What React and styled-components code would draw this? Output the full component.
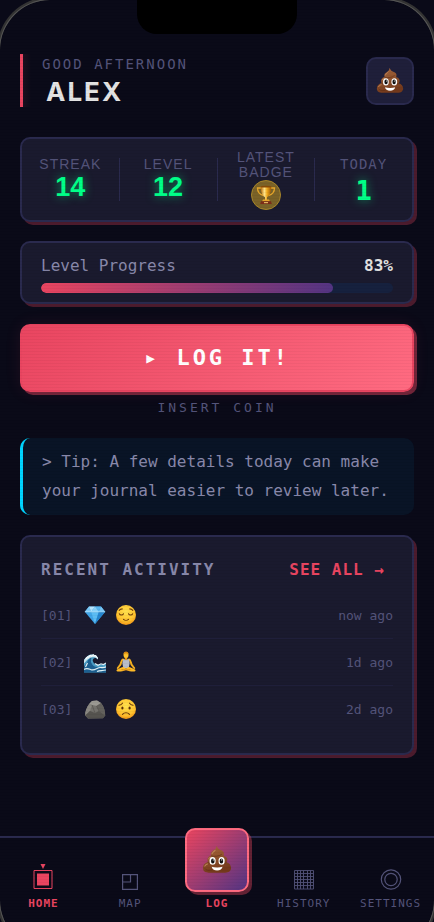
import React from "react";
import styled, { createGlobalStyle, css } from "styled-components";

const activity = [
  { id: "01", kind: "gem", mood: "relieved", when: "now ago" },
  { id: "02", kind: "wave", mood: "calm", when: "1d ago" },
  { id: "03", kind: "rock", mood: "worried", when: "2d ago" },
];

const progress = 83;

const Poop = ({ size }) => (
  <svg width={size} height={size} viewBox="0 0 32 32" aria-hidden="true">
    <defs>
      <linearGradient id="poop" x1="0" y1="0" x2="0.3" y2="1">
        <stop offset="0" stopColor="#a5673f" />
        <stop offset="0.55" stopColor="#8f522c" />
        <stop offset="1" stopColor="#74391b" />
      </linearGradient>
    </defs>
    <path
      d="M15 1c.5 1.800-.2 3.200-2.200 4.400-2.200 1.300-3.600 2.700-3.300 4.900.1.600.3 1 .3 1-2.500.5-4.200 2.500-4 4.900.1 1.200.5 2 .5 2C3.400 18.900 1 21.300 1 24.500c0 3.400 2.500 5 6.200 5h17.600c3.600 0 6.200-1.700 6.200-4.900 0-3.100-2-5.300-4.900-6.100.8-1 1.100-2.200.8-3.500-.5-2-1.900-3-4-3.200.8-1.600.8-3.600-.5-4.900-1-1-2.500-1.200-3.800-2C17 4.100 16.500 1.700 15 1z"
      fill="url(#poop)"
    />
    <path d="M9.700 11.700c3.500 1 8.700.4 11.500-1.900M6 18.700c3 .9 5 .7 7 .2M26.300 18.800c-3 1.200-6 1-8.500.2M3 25c2 2.700 6 2 8 1.500" stroke="#5d2c14" strokeWidth="0.900" fill="none" opacity="0.700" />
    <path d="M14 5.600c-1.200 1.500-2.800 2-3.300 3.700M7.200 14.600c.5-1 1.500-1.400 2.600-1.500M3 22.500c.6-1.300 1.700-2 3-2.300" stroke="#c98e63" strokeWidth="1.100" fill="none" strokeLinecap="round" opacity="0.800" />
    <ellipse cx="11.300" cy="17" rx="3.300" ry="4.100" fill="#fff" />
    <ellipse cx="20.900" cy="17" rx="3.300" ry="4.100" fill="#fff" />
    <ellipse cx="11.500" cy="17" rx="1.900" ry="2.700" fill="#111" />
    <ellipse cx="20.700" cy="17" rx="1.900" ry="2.700" fill="#111" />
    <circle cx="12" cy="15.900" r="0.600" fill="#fff" />
    <circle cx="21" cy="15.900" r="0.600" fill="#fff" />
    <path d="M10.300 23.200c3.400 1 8.200 1 11.600 0-.4 2.500-2.600 3.900-5.800 3.900s-5.400-1.400-5.800-3.900z" fill="#fff" />
  </svg>
);

const Trophy = () => (
  <svg width="20" height="20" viewBox="0 0 20 20" aria-hidden="true">
    <defs>
      <linearGradient id="cup" x1="0" x2="1">
        <stop offset="0" stopColor="#b4690a" />
        <stop offset="0.350" stopColor="#ffe48a" />
        <stop offset="0.600" stopColor="#f0a91c" />
        <stop offset="1" stopColor="#9a5606" />
      </linearGradient>
    </defs>
    <path d="M5.500 3H1.500c0 4 2 6.500 6 7.500M14.500 3h4c0 4-2 6.500-6 7.500" fill="none" stroke="#e5a52a" strokeWidth="1.300" />
    <path d="M4.700 1.500h10.600c0 5-1.300 9.500-4.300 10.500v3H9v-3C6 11 4.700 6.500 4.700 1.500z" fill="url(#cup)" />
    <ellipse cx="10" cy="1.700" rx="5.300" ry="0.900" fill="#8a4c08" />
    <path d="M7 14.500h6l1 2H6z" fill="#e5a52a" />
    <path d="M5 16.300h10l.8 2.700H4.200z" fill="#7c2c17" />
    <path d="M8 17h4v1.200H8z" fill="#e0b060" />
  </svg>
);

const Gem = () => (
  <svg width="22" height="22" viewBox="0 0 22 22" aria-hidden="true">
    <path d="M5 2.500h12l4.200 5.300L11 20 .8 7.800z" fill="#3fa4e8" />
    <path d="M5 2.500L.8 7.800h6.400zM17 2.500l4.200 5.300h-6.400z" fill="#7cc9f6" />
    <path d="M5 2.500h6L7.200 7.800z" fill="#b7e5fd" />
    <path d="M17 2.500h-6l3.800 5.300z" fill="#58b5ef" />
    <path d="M11 2.500l3.800 5.300H7.200z" fill="#8ad3fa" />
    <path d="M7.200 7.800h7.600L11 20z" fill="#5bbcf3" />
    <path d="M14.800 7.800h6.400L11 20z" fill="#2585ce" />
    <path d="M.8 7.800h20.400" stroke="#d5f1ff" strokeWidth="0.600" />
  </svg>
);

const Wave = () => (
  <svg width="22" height="22" viewBox="0 0 22 22" aria-hidden="true">
    <path d="M0 9C2 5.500 5 3.500 8.500 3.500c3.500.2 5.700 2.200 5.500 5-1.500-1.800-3.500-2-4.600-.7-1.400 1.700-.3 4.700 3.400 5.700 3 .8 5.200-1 9.200-.3V21.500H0z" fill="#4a9cc4" />
    <path d="M3 12c.8-3 2.500-5 4.700-5.500C6 9.300 7 13 10 15.300c3.500 2 7 .5 12 1v5.200H0V15z" fill="#1c5f90" />
    <path d="M0 9C2 5.500 5 3.500 8.500 3.500c3.500.2 5.700 2.200 5.500 5C12.500 6.500 10.500 6 8.500 6.200 5.300 6.500 2.500 9 0 12.500z" fill="#cfe9f1" />
    <path d="M2 8l1-2 1.500.7L6 4.300l1.500 1L9 3.500l1.700 1.300 1.300-.2.6 1.800 1.400.8" stroke="#fff" strokeWidth="1" fill="none" />
    <path d="M0 18.500c3-2 5-.5 7 .2 4 1.300 6-2.200 9.500-2.200 2 0 3.500.5 5.500-.7M11 12.500l3 1.800 3-1.500 2.500.8L22 12M1.500 16l2-4M13 20.500c3-1.500 5-.5 9-1.500" stroke="#e1f2f6" strokeWidth="1.200" fill="none" />
  </svg>
);

const Rock = () => (
  <svg width="22" height="22" viewBox="0 0 22 22" aria-hidden="true">
    <path d="M1.200 17.500C.8 13 3 9 5.500 5.500L8 3l5-.5 4 2.500c3 3.500 4 7.500 4.200 12.500L19 20.200l-15 .2z" fill="#74726d" />
    <path d="M5.500 5.500L8 3l5-.5L17 5l-4.500 3L8 7z" fill="#9b9993" />
    <path d="M5.500 5.500L8 7l-2 6-4.800 4.500C.8 13 3 9 5.500 5.500z" fill="#8a8882" />
    <path d="M12.500 8L17 5c3 3.500 4 7.500 4.200 12.500L15 13z" fill="#64625d" />
    <path d="M1.200 17.500L6 13l5 2 4-2 6.200 4.500L19 20.200l-15 .2z" fill="#55534f" />
    <path d="M8 7l3 8M12.500 8L15 13" stroke="#504e4a" strokeWidth="0.600" />
  </svg>
);

const FaceBase = () => (
  <>
    <defs>
      <radialGradient id="face" cx="0.500" cy="0.350" r="0.700">
        <stop offset="0" stopColor="#ffe24f" />
        <stop offset="0.650" stopColor="#ffc22e" />
        <stop offset="1" stopColor="#f08c12" />
      </radialGradient>
    </defs>
    <circle cx="11" cy="11" r="10" fill="url(#face)" />
  </>
);

const Relieved = () => (
  <svg width="22" height="22" viewBox="0 0 22 22" aria-hidden="true">
    <FaceBase />
    <g stroke="#6b3a0a" strokeWidth="1.100" fill="none" strokeLinecap="round">
      <path d="M4.300 9.800c.8 1.600 3.400 1.600 4.200 0M13.500 9.800c.8 1.600 3.400 1.600 4.200 0" />
      <path d="M4.200 6.400c.8-1 1.900-1.500 3-1.500M17.800 6.400c-.8-1-1.900-1.500-3-1.500" />
      <path d="M8.500 15.300c1.300 1.300 3.700 1.300 5 0" />
    </g>
  </svg>
);

const Worried = () => (
  <svg width="22" height="22" viewBox="0 0 22 22" aria-hidden="true">
    <FaceBase />
    <g stroke="#6b3a0a" strokeWidth="1.100" fill="none" strokeLinecap="round">
      <path d="M4 7.300c1.500-.3 2.700-1 3.500-2.100M18 7.300c-1.500-.3-2.700-1-3.500-2.100" />
      <path d="M7.500 16.300c1.700-2 5.300-2 7 0" />
    </g>
    <ellipse cx="7.400" cy="9.900" rx="1.100" ry="1.500" fill="#5a2e08" />
    <ellipse cx="14.600" cy="9.900" rx="1.100" ry="1.500" fill="#5a2e08" />
  </svg>
);

const Calm = () => (
  <svg width="22" height="22" viewBox="0 0 22 22" aria-hidden="true">
    <path d="M8 8.500C6.500 9 6.300 11 5.500 13.500L2.800 17M14 8.500c1.500.5 1.700 2.500 2.500 5l2.700 3.500" stroke="#f5b01f" strokeWidth="2" fill="none" strokeLinecap="round" />
    <path d="M8 8.200h6l.6 4-.8 5H8.200l-.8-5z" fill="#b9bdc9" />
    <path d="M9.800 6h2.400v2.400c-.6.900-1.800.9-2.400 0z" fill="#e89a14" />
    <ellipse cx="11" cy="4" rx="2.500" ry="3.100" fill="#ffc22e" />
    <path d="M8.500 3.500C8.500 1.500 9.500.6 11 .6s2.500.9 2.500 2.900C12.500 2 9.500 2 8.500 3.500z" fill="#d88a10" />
    <path d="M2 18.500c2-1 4.500-2.500 6.500-2.500l2.500 1.500L13.500 16c2 0 4.500 1.500 6.500 2.500 1 .8.500 2-.7 2-3 .2-5-.2-8.300-1.500-3.300 1.300-5.300 1.700-8.300 1.500-1.200 0-1.700-1.200-.7-2z" fill="#ffba26" />
    <path d="M6.500 18.600c2 .6 7 .6 9 0" stroke="#c97a0c" strokeWidth="0.700" fill="none" />
  </svg>
);

const icons = {
  gem: Gem,
  wave: Wave,
  rock: Rock,
  relieved: Relieved,
  calm: Calm,
  worried: Worried,
};

const HomeIcon = () => (
  <svg width="20" height="26" viewBox="0 0 20 26" fill="none" aria-hidden="true">
    <path d="M7.500 0h5L10 5z" fill="currentColor" />
    <path d="M1 6.500h18v18H1z" stroke="currentColor" />
    <path d="M4 9.500h12v12H4z" fill="currentColor" />
  </svg>
);

const MapIcon = () => (
  <svg width="16" height="16" viewBox="0 0 16 16" fill="none" stroke="currentColor" strokeWidth="1.200" aria-hidden="true">
    <path d="M.6.600h14.800v14.800H.6zM8.500.600v7.400H.6" />
  </svg>
);

const HistoryIcon = () => (
  <svg width="20" height="26" viewBox="0 0 20 26" fill="none" stroke="currentColor" aria-hidden="true">
    <path d="M.5 6.500h19v18.500H.5zM3.500 6.500v18.500M6.500 6.500v18.500M9.500 6.500v18.500M13.500 6.500v18.500M16.500 6.500v18.500M.5 9.500h19M.5 12.500h19M.5 15.500h19M.5 18.500h19M.5 21.500h19" strokeWidth="0.900" />
  </svg>
);

const SettingsIcon = () => (
  <svg width="22" height="26" viewBox="0 0 22 26" fill="none" stroke="currentColor" strokeWidth="1.200" aria-hidden="true">
    <circle cx="11" cy="15.500" r="9.700" />
    <circle cx="11" cy="15.500" r="6.200" />
  </svg>
);

const App = () => {
  return (
    <Screen>
      <GlobalStyle />
      <Notch />
      <Main>
        <Header>
          <Greeting>
            <Hello>GOOD AFTERNOON</Hello>
            <UserName>ALEX</UserName>
          </Greeting>
          <AvatarButton aria-label="Profile">
            <Poop size={28} />
          </AvatarButton>
        </Header>

        <StatsCard>
          <Stat>
            <StatLabel>STREAK</StatLabel>
            <StatValue>14</StatValue>
          </Stat>
          <Divider />
          <Stat>
            <StatLabel>LEVEL</StatLabel>
            <StatValue>12</StatValue>
          </Stat>
          <Divider />
          <Stat>
            <StatLabel>LATEST BADGE</StatLabel>
            <Badge>
              <Trophy />
            </Badge>
          </Stat>
          <Divider />
          <Stat $mono>
            <StatLabel>TODAY</StatLabel>
            <StatValue>1</StatValue>
          </Stat>
        </StatsCard>

        <ProgressCard>
          <ProgressRow>
            <span>Level Progress</span>
            <strong>{progress}%</strong>
          </ProgressRow>
          <Track>
            <Fill style={{ width: `${progress}%` }} />
          </Track>
        </ProgressCard>

        <LogButton>▸ LOG IT!</LogButton>
        <Coin>INSERT COIN</Coin>

        <Tip>&gt; Tip: A few details today can make your journal easier to review later.</Tip>

        <ActivityCard>
          <ActivityHead>
            <ActivityTitle>RECENT ACTIVITY</ActivityTitle>
            <SeeAll>SEE ALL →</SeeAll>
          </ActivityHead>
          <List>
            {activity.map((item) => {
              const Kind = icons[item.kind];
              const Mood = icons[item.mood];
              return (
                <Row key={item.id}>
                  <span>[{item.id}]</span>
                  <Icons>
                    <Kind />
                    <Mood />
                  </Icons>
                  <span>{item.when}</span>
                </Row>
              );
            })}
          </List>
        </ActivityCard>
      </Main>

      <Nav>
        <NavLink href="#home" $active>
          <HomeIcon />
          HOME
        </NavLink>
        <NavLink href="#map">
          <MapIcon />
          MAP
        </NavLink>
        <NavLink href="#log" $active>
          <LogTile>
            <Poop size={30} />
          </LogTile>
          LOG
        </NavLink>
        <NavLink href="#history">
          <HistoryIcon />
          HISTORY
        </NavLink>
        <NavLink href="#settings">
          <SettingsIcon />
          SETTINGS
        </NavLink>
      </Nav>
      <Scanlines />
      <Bezel />
    </Screen>
  );
};

export default App;

const mono = `"DejaVu Sans Mono", monospace`;
const muted = "#54547a";

const GlobalStyle = createGlobalStyle`
  * {
    box-sizing: border-box;
  }
  body {
    margin: 0;
    background: #0a0a18;
    font-family: ${mono};
    color: #8888aa;
  }
  button {
    font-family: inherit;
    cursor: pointer;
  }
`;

const Screen = styled.div`
  min-height: 100vh;
  display: flex;
  flex-direction: column;
  overflow: hidden;
`;

const Notch = styled.div`
  width: 160px;
  height: 34px;
  margin: 0 auto;
  border-radius: 0 0 20px 20px;
  background: #000;
`;

const Main = styled.main`
  flex: 1;
  display: flex;
  flex-direction: column;
  padding: 20px;
`;

const Header = styled.header`
  display: flex;
  align-items: center;
  justify-content: space-between;
  margin-bottom: 30px;
`;

const Greeting = styled.div`
  height: 53px;
  padding-left: 19px;
  border-left: 3px solid #e94560;
  background: linear-gradient(90deg, rgba(233, 69, 96, 0.08), transparent 8px);
`;

const Hello = styled.p`
  margin: 0;
  font-size: 14px;
  line-height: 21px;
  letter-spacing: 2px;
  color: ${muted};
`;

const UserName = styled.h1`
  margin: 0;
  padding-left: 4px;
  font-family: Inter, sans-serif;
  font-size: 26px;
  line-height: 34px;
  letter-spacing: 2px;
  color: #e2e2e2;
`;

const AvatarButton = styled.button`
  width: 48px;
  height: 48px;
  padding: 0;
  display: grid;
  place-items: center;
  border: 2px solid #2a2a4e;
  border-radius: 10px;
  background: #1f1f3a;
`;

const card = css`
  border: 2px solid #2a2a4e;
  border-radius: 10px;
  background: #1a1a2e;
  box-shadow: 3px 3px 0 rgba(233, 69, 96, 0.3);
`;

const StatsCard = styled.section`
  ${card}
  display: flex;
  align-items: center;
  min-height: 85px;
  margin-bottom: 19px;
`;

const Divider = styled.div`
  width: 1px;
  height: 43px;
  background: #2a2a4e;
`;

const Stat = styled.div`
  flex: 1;
  display: flex;
  flex-direction: column;
  align-items: center;
  gap: ${({ $mono }) => ($mono ? 4 : 0)}px;
  padding-top: ${({ $mono }) => ($mono ? 4 : 0)}px;
  font-family: ${({ $mono }) => ($mono ? mono : `"Liberation Sans", sans-serif`)};
`;

const StatLabel = styled.span`
  max-width: 80px;
  font-size: 14px;
  line-height: 15px;
  letter-spacing: 1px;
  text-align: center;
  color: ${muted};
`;

const StatValue = styled.span`
  font-size: 27px;
  line-height: 30px;
  font-weight: 700;
  color: #00ff88;
  text-shadow: 0 0 10px rgba(0, 255, 136, 0.5);
`;

const Badge = styled.span`
  width: 30px;
  height: 30px;
  display: grid;
  place-items: center;
  border: 1px solid #a8862a;
  border-radius: 50%;
  background: #7a6228;
`;

const ProgressCard = styled.section`
  ${card}
  padding: 10px 19px 9px;
  margin-bottom: 20px;
`;

const ProgressRow = styled.div`
  display: flex;
  justify-content: space-between;
  margin-bottom: 4px;
  font-size: 16px;
  line-height: 26px;

  strong {
    color: #e2e2e2;
  }
`;

const Track = styled.div`
  height: 10px;
  border-radius: 5px;
  background: #16213e;
  overflow: hidden;
`;

const Fill = styled.div`
  height: 100%;
  border-radius: 5px;
  background: linear-gradient(90deg, #e94560, #533483);
`;

const LogButton = styled.button`
  height: 68px;
  padding: 0 0 2px;
  border: 2px solid #e94560;
  border-radius: 10px;
  background: linear-gradient(135deg, #e94560, #ff6b81);
  box-shadow: 3px 3px 0 rgba(233, 69, 96, 0.45), 0 0 16px rgba(233, 69, 96, 0.1);
  font-size: 22px;
  font-weight: 700;
  letter-spacing: 3px;
  color: #fff;
`;

const Coin = styled.p`
  margin: 5px 0 20px;
  font-size: 13px;
  line-height: 21px;
  letter-spacing: 3px;
  text-align: center;
  color: ${muted};
`;

const Tip = styled.p`
  margin: 0 0 20px;
  padding: 9px 19px 10px;
  border-left: 3px solid #00d4ff;
  border-radius: 10px;
  background: #091426;
  font-size: 16px;
  line-height: 29px;
`;

const ActivityCard = styled.section`
  ${card}
  min-height: 220px;
  padding: 15px 19px 20px;
`;

const ActivityHead = styled.div`
  display: flex;
  align-items: center;
  justify-content: space-between;
  margin-bottom: 5px;
`;

const ActivityTitle = styled.h2`
  margin: 0;
  font-size: 16px;
  letter-spacing: 2px;
`;

const SeeAll = styled.button`
  height: 35px;
  padding: 0 8px;
  border: 0;
  background: none;
  font-size: 16px;
  font-weight: 700;
  letter-spacing: 1px;
  color: #e94560;
`;

const List = styled.ul`
  margin: 0;
  padding: 0;
  list-style: none;
`;

const Row = styled.li`
  display: flex;
  align-items: center;
  gap: 12px;
  height: 47px;
  border-bottom: 1px solid #1f1f3a;
  font-size: 13px;
  color: ${muted};

  &:last-child {
    border-bottom-color: transparent;
  }
`;

const Icons = styled.span`
  flex: 1;
  display: flex;
  gap: 9px;
`;

const Nav = styled.nav`
  display: flex;
  height: 86px;
  padding-bottom: 11px;
  border-top: 2px solid #2a2a4e;
`;

const NavLink = styled.a`
  flex: 1;
  min-width: 0;
  display: flex;
  flex-direction: column;
  align-items: center;
  justify-content: flex-end;
  gap: 6px;
  font-size: 11px;
  line-height: 15px;
  letter-spacing: 1px;
  text-decoration: none;
  color: ${({ $active }) => ($active ? "#e94560" : muted)};
  font-weight: ${({ $active }) => ($active ? 700 : 400)};

  svg {
    flex-shrink: 0;
  }
`;

const LogTile = styled.span`
  flex-shrink: 0;
  width: 64px;
  height: 64px;
  margin-bottom: -2px;
  display: grid;
  place-items: center;
  border: 2px solid #ff6b81;
  border-radius: 10px;
  background: linear-gradient(135deg, #e94560, #533483);
  box-shadow: 3px 3px 0 rgba(233, 69, 96, 0.4);
`;

const Scanlines = styled.div`
  position: fixed;
  inset: 0;
  pointer-events: none;
  background: repeating-linear-gradient(0deg, rgba(0, 0, 0, 0.03) 0 1px, transparent 1px 3px);
`;

const Bezel = styled.div`
  position: fixed;
  inset: 0 0 -28px;
  pointer-events: none;
  border-radius: 50px;
  box-shadow: 0 0 0 1px #555, 0 0 0 3px #333, 0 0 0 30px #0a0a18;
`;
